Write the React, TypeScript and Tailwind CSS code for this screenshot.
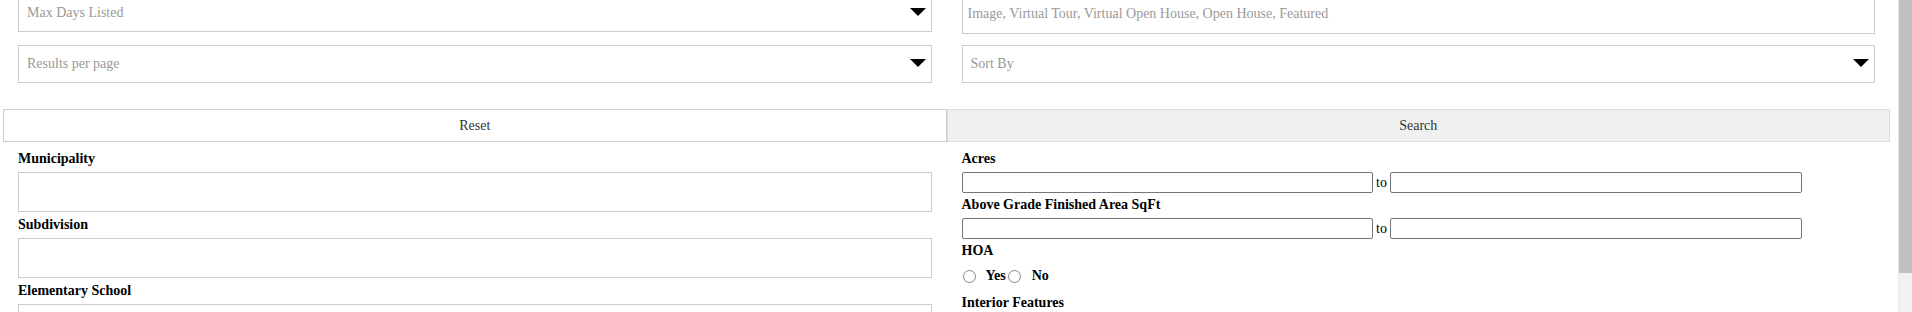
import React from "react";

function Arrow() {
  return (
    <svg width="16" height="8" viewBox="0 0 16 8" className="mb-[2px] shrink-0">
      <polygon points="0,0 16,0 8,8" fill="#000" />
    </svg>
  );
}

function SelectBox({ placeholder }: { placeholder: string }) {
  return (
    <div className="flex h-[38px] items-center justify-between border border-[#cccccc] bg-white pl-[8px] pr-[5px]">
      <span className="text-[14px] leading-[20px] text-[#999999]">{placeholder}</span>
      <Arrow />
    </div>
  );
}

function Label({ children, className = "" }: { children: React.ReactNode; className?: string }) {
  return <div className={"text-[14px] font-bold text-black " + className}>{children}</div>;
}

function RangeRow() {
  return (
    <div className="flex h-[22px] items-start text-[14px] text-black">
      <div className="h-[21px] w-[45%] rounded-[2px] border border-[#767676] bg-white" />
      <span className="px-[3.5px] leading-[21px]">to</span>
      <div className="h-[21px] w-[45%] rounded-[2px] border border-[#767676] bg-white" />
    </div>
  );
}

function Radio() {
  return <span className="inline-block h-[13px] w-[13px] shrink-0 rounded-full border border-[#858585] bg-white" />;
}

export default function App() {
  return (
    <div className="flex h-[312px] w-full overflow-hidden bg-white font-[family-name:Liberation_Serif,Times_New_Roman,serif]">
      <div className="min-w-0 flex-1">
        <div className="-mt-[6px] ml-[3px] w-[1887px]">
          {/* Row 1 */}
          <div className="grid grid-cols-2 items-start">
            <div className="px-[15px]">
              <SelectBox placeholder="Max Days Listed" />
            </div>
            <div className="px-[15px]">
              <div className="flex h-[40px] items-center border border-[#cccccc] bg-white pl-[5px]">
                <span className="text-[14px] leading-[20px] text-[#999999]">
                  Image, Virtual Tour, Virtual Open House, Open House, Featured
                </span>
              </div>
            </div>
          </div>
          {/* Row 2 */}
          <div className="mt-[11px] grid grid-cols-2 items-start">
            <div className="px-[15px]">
              <SelectBox placeholder="Results per page" />
            </div>
            <div className="px-[15px]">
              <SelectBox placeholder="Sort By" />
            </div>
          </div>
          {/* Buttons */}
          <div className="mt-[26px] flex">
            <button className="h-[33px] w-1/2 border border-[#cccccc] bg-white text-[14px] text-[#333333]">
              Reset
            </button>
            <button className="h-[33px] w-1/2 border border-[#dddddd] bg-[#f0f0f0] text-[14px] text-[#333333]">
              Search
            </button>
          </div>
          {/* Fields */}
          <div className="grid grid-cols-2 items-start pt-[4px]">
            <div className="px-[15px]">
              <Label className="mb-[4px] pt-[3px] leading-[19px]">Municipality</Label>
              <div className="h-[40px] border border-[#cccccc] bg-white" />
              <Label className="mb-[4px] pt-[3px] leading-[19px]">Subdivision</Label>
              <div className="h-[40px] border border-[#cccccc] bg-white" />
              <Label className="mb-[4px] pt-[3px] leading-[19px]">Elementary School</Label>
              <div className="h-[40px] border border-[#cccccc] bg-white" />
            </div>
            <div className="px-[15px]">
              <Label className="mb-[4px] pt-[3px] leading-[19px]">Acres</Label>
              <RangeRow />
              <Label className="mb-[2px] leading-[22px]">Above Grade Finished Area SqFt</Label>
              <RangeRow />
              <Label className="leading-[22px]">HOA</Label>
              <div className="mt-[4px] flex h-[20px] items-center text-[14px] font-bold text-black">
                <span className="ml-[1px] flex items-center">
                  <Radio />
                </span>
                <span className="ml-[10px] leading-[20px]">Yes</span>
                <span className="ml-[2px] flex items-center">
                  <Radio />
                </span>
                <span className="ml-[11px] leading-[20px]">No</span>
              </div>
              <Label className="mt-[6px] leading-[22px]">Interior Features</Label>
            </div>
          </div>
        </div>
      </div>
      <div className="flex h-full w-[14px] shrink-0 justify-end border-l border-[#e8e8e8] bg-[#f1f1f1]">
        <div className="h-[273px] w-[13px] bg-[#c1c1c1]" />
      </div>
    </div>
  );
}
